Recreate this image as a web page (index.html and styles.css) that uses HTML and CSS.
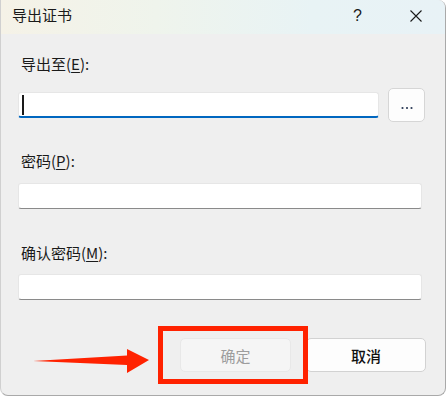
FILE: index.html
```html
<!DOCTYPE html>
<html lang="zh-CN">
<head>
<meta charset="utf-8">
<title>导出证书</title>
<link rel="stylesheet" href="styles.css">
</head>
<body>
<div class="window">
  <div class="titlebar">
    <span class="title">导出证书</span>
    <span class="help">?</span>
    <span class="close">
      <svg width="14" height="14" viewBox="0 0 14 14"><path d="M1.5 1.5 L12.5 12.5 M12.5 1.5 L1.5 12.5" stroke="#1a1a1a" stroke-width="1.1" fill="none"/></svg>
    </span>
  </div>
  <div class="content">
    <div class="label l1">导出至(<u>E</u>):</div>
    <div class="row1">
      <div class="input focus"><span class="caret"></span></div>
      <div class="browse">
        <svg width="12" height="4" viewBox="0 0 12 4"><circle cx="1.5" cy="2" r="1.1" fill="#2b3a55"/><circle cx="6" cy="2" r="1.1" fill="#2b3a55"/><circle cx="10.5" cy="2" r="1.1" fill="#2b3a55"/></svg>
      </div>
    </div>
    <div class="label l2">密码(<u>P</u>):</div>
    <div class="input wide i2"></div>
    <div class="label l3">确认密码(<u>M</u>):</div>
    <div class="input wide i3"></div>
    <div class="buttons">
      <div class="btn ok">确定</div>
      <div class="btn cancel">取消</div>
    </div>
  </div>
  <div class="highlight"></div>
  <svg class="arrow" width="120" height="28" viewBox="0 0 120 28">
    <path d="M0 14 L94 8.5 L94 2 L116 13 L94 26 L94 18 Z" fill="#ff2200"/>
  </svg>
</div>
</body>
</html>
```
FILE: styles.css
```css
* { box-sizing: border-box; }
html, body { margin: 0; padding: 0; background: #ffffff; }
body {
  font-family: "Noto Sans CJK SC", "Microsoft YaHei", "Noto Sans", sans-serif;
  color: #1a1a1a;
}
.window {
  position: relative;
  width: 446px;
  height: 396px;
  background: #efefef;
  border: 1px solid #a9a9a9;
  border-left-color: #d0d0d0;
  border-top: 0;
  border-radius: 0 8px 8px 8px;
  overflow: hidden;
}
.titlebar {
  height: 34px;
  display: flex;
  align-items: center;
  background: linear-gradient(90deg, #f5f2e7 0%, #eff4ec 35%, #e8f3f5 70%, #e8f2f6 100%);
}
.title {
  margin-left: 11px;
  font-size: 15px;
  line-height: 20px;
  margin-top: -4px;
}
.help {
  margin-left: auto;
  font-family: "Liberation Sans", sans-serif;
  font-size: 16px;
  margin-right: 47px;
  margin-top: -3px;
}
.close {
  display: flex;
  margin-right: 22px;
  margin-top: -2px;
}
.content {
  display: flex;
  flex-direction: column;
  padding: 20px 0 0 17px;
}
.label {
  font-size: 15px;
  line-height: 20px;
  padding-left: 3px;
  height: 20px;
}
.label u { text-underline-offset: 2px; }
.row1 {
  margin-top: 14px;
  height: 34px;
  display: flex;
  align-items: center;
}
.input {
  height: 26px;
  background: #ffffff;
  border: 1px solid #e6e6e6;
  border-bottom: 1px solid #8a8a8a;
  border-radius: 3px;
}
.input.focus {
  width: 361px;
  border-bottom: 2px solid #0067c0;
  position: relative;
}
.caret {
  position: absolute;
  left: 3px;
  top: 2px;
  width: 2px;
  height: 20px;
  background: #1a1a1a;
}
.browse {
  margin-left: 9px;
  width: 37px;
  height: 34px;
  background: #fdfdfd;
  border: 1px solid #d6d6d6;
  border-radius: 5px;
  display: flex;
  align-items: center;
  justify-content: center;
  padding-top: 6px;
}
.wide { width: 404px; }
.l2 { margin-top: 29px; }
.i2 { margin-top: 12px; }
.l3 { margin-top: 34px; }
.i3 { margin-top: 11px; }
.buttons {
  margin-top: 38px;
  display: flex;
  gap: 15px;
  padding-left: 162px;
}
.btn {
  height: 34px;
  font-size: 15px;
  display: flex;
  align-items: center;
  justify-content: center;
  border-radius: 5px;
}
.ok {
  width: 111px;
  background: #f5f5f5;
  border: 1px solid #e8e8e8;
  color: #9d9d9d;
}
.cancel {
  width: 120px;
  background: #fdfdfd;
  border: 1px solid #d2d2d2;
  color: #111111;
  font-weight: 500;
}
.highlight {
  position: absolute;
  left: 157px;
  top: 326px;
  width: 150px;
  height: 58px;
  border: 5px solid #ff2200;
}
.arrow {
  position: absolute;
  left: 32px;
  top: 347px;
}
```
